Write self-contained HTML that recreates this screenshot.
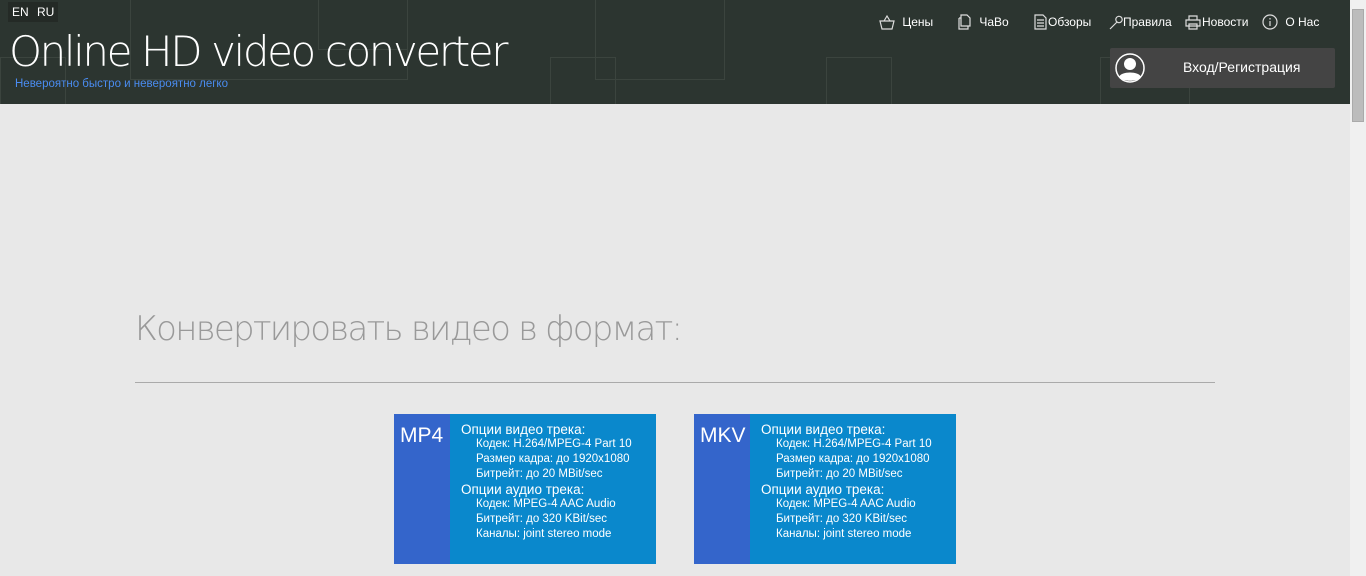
<!DOCTYPE html>
<html><head><meta charset="utf-8"><style>
*{margin:0;padding:0;box-sizing:border-box}
body{width:1366px;height:576px;overflow:hidden;background:#e8e8e8;font-family:"Liberation Sans",sans-serif;position:relative}
#hdr{position:absolute;left:0;top:0;width:1350px;height:104px;background:#2c3530;overflow:hidden}
.sq{position:absolute;border:1px solid #3b443e}
.lang{position:absolute;top:2px;height:20px;background:#242a26;color:#fff;font-size:12px;line-height:20px;padding:0 4px}
h1{position:absolute;left:9px;top:27px;font-size:42px;color:#fff;letter-spacing:-2.4px;font-family:"DejaVu Sans","Liberation Sans",sans-serif;font-weight:200}
.sub{position:absolute;left:15px;top:78px;font-size:11.5px;color:#4a8cf0}
.nav{position:absolute;top:14px;color:#fff;font-size:12px;display:flex;align-items:center;gap:4px}
.nav svg{stroke:#ddd;fill:none;stroke-width:1.2}
#login{position:absolute;left:1110px;top:48px;width:225px;height:40px;background:#444;border-radius:2px;color:#fff;font-size:14px}
#login .t{position:absolute;left:73px;top:11px}
#sb{position:absolute;left:1350px;top:0;width:16px;height:576px;background:#f0f0f0}
#sb .th{position:absolute;left:2px;top:9px;width:12px;height:113px;background:#bcbcbc;border:1px solid #aaa}
h2{position:absolute;left:135px;top:309px;font-size:34px;color:#999;font-family:"DejaVu Sans",sans-serif;font-weight:200;letter-spacing:-1.75px}
.hr{position:absolute;left:135px;top:382px;width:1080px;height:1px;background:#aaa}
.card{position:absolute;top:414px;width:262px;height:150px;background:#0a88cc;color:#fff}
.card .l{position:absolute;left:0;top:0;width:56px;height:150px;background:#3465cb}
.card .n{position:absolute;left:6px;top:10px;font-size:21px}
.card .tx{position:absolute;left:67px;top:8px;font-size:11.5px;line-height:15px}
.card .h{font-size:13.5px}
.card .i{padding-left:15px}
</style></head><body>
<div id="hdr">
<div class="sq" style="left:0;top:57px;width:66px;height:70px"></div>
<div class="sq" style="left:130px;top:-10px;width:278px;height:90px"></div>
<div class="sq" style="left:318px;top:-10px;width:90px;height:60px"></div>
<div class="sq" style="left:550px;top:57px;width:66px;height:70px"></div>
<div class="sq" style="left:595px;top:-10px;width:130px;height:90px"></div>
<div class="sq" style="left:826px;top:57px;width:66px;height:70px"></div>
<div class="sq" style="left:1100px;top:57px;width:90px;height:70px"></div>
<div class="lang" style="left:8px">EN</div><div class="lang" style="left:33px">RU</div>
<h1>Online HD video converter</h1>
<div class="sub">Невероятно быстро и невероятно легко</div>
<div class="nav" style="left:879px"><svg width="16" height="16"><path d="M1 7h14l-2 8H3z M5 7l3-5 3 5"/></svg>&nbsp;Цены</div>
<div class="nav" style="left:956px"><svg width="16" height="16"><path d="M3 4h2V1h6l3 3v8H5v-8 M3 4v11h9v-3"/></svg>&nbsp;ЧаВо</div>
<div class="nav" style="left:1033px;gap:1px"><svg width="14" height="16"><path d="M2 1h8l3 3v11H2z M4 6h7M4 9h7M4 12h7"/></svg>Обзоры</div>
<div class="nav" style="left:1109px;gap:0"><svg width="14" height="16"><path d="M1 15l7-7 M8 8a3 3 0 1 0 4-5a3 3 0 0 0-4 5"/></svg>Правила</div>
<div class="nav" style="left:1185px;gap:1px"><svg width="16" height="16"><path d="M4 2h8v4H4z M1 6h14v6H1z M4 10h8v5H4z"/></svg>Новости</div>
<div class="nav" style="left:1262px"><svg width="16" height="16"><circle cx="8" cy="8" r="7"/><path d="M8 7v5M8 4v1.5"/></svg>&nbsp;О Нас</div>
<div id="login"><svg width="32" height="32" style="position:absolute;left:4px;top:4px"><circle cx="16" cy="16" r="14" fill="none" stroke="#fff" stroke-width="1.5"/><circle cx="16" cy="12" r="6" fill="#fff"/><path d="M5 25c2-6 20-6 22 0c-5 5-17 5-22 0z" fill="#fff"/></svg><span class="t">Вход/Регистрация</span></div>
</div>
<div id="sb"><div class="th"></div></div>
<h2>Конвертировать видео в формат:</h2>
<div class="hr"></div>
<div class="card" style="left:394px"><div class="l"></div><div class="n">MP4</div><div class="tx"><div class="h">Опции видео трека:</div><div class="i">Кодек: H.264/MPEG-4 Part 10</div><div class="i">Размер кадра: до 1920x1080</div><div class="i">Битрейт: до 20 MBit/sec</div><div class="h">Опции аудио трека:</div><div class="i">Кодек: MPEG-4 AAC Audio</div><div class="i">Битрейт: до 320 KBit/sec</div><div class="i">Каналы: joint stereo mode</div></div></div>
<div class="card" style="left:694px"><div class="l"></div><div class="n">MKV</div><div class="tx"><div class="h">Опции видео трека:</div><div class="i">Кодек: H.264/MPEG-4 Part 10</div><div class="i">Размер кадра: до 1920x1080</div><div class="i">Битрейт: до 20 MBit/sec</div><div class="h">Опции аудио трека:</div><div class="i">Кодек: MPEG-4 AAC Audio</div><div class="i">Битрейт: до 320 KBit/sec</div><div class="i">Каналы: joint stereo mode</div></div></div>
</body></html>
